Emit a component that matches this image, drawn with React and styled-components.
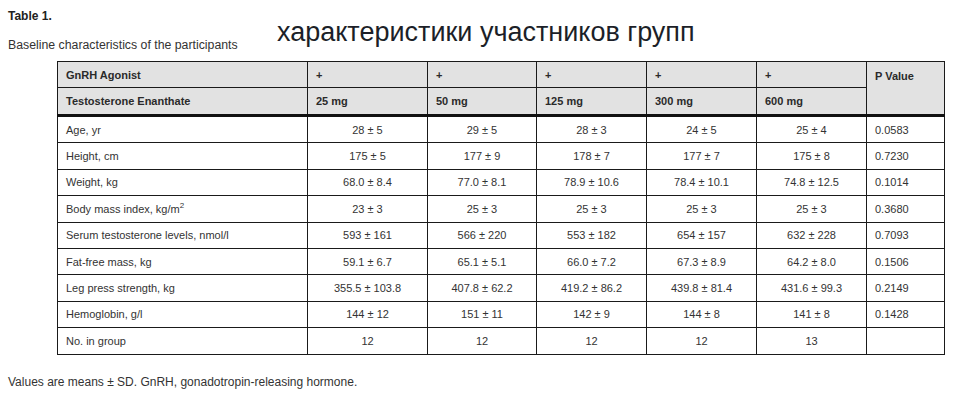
import styled, { createGlobalStyle } from 'styled-components';

const Global = createGlobalStyle`
  body {
    margin: 0;
    background: #fff;
    font-family: 'Liberation Sans', Arial, sans-serif;
    color: #333;
  }
`;

const Page = styled.div`
  width: 954px;
  height: 403px;
  padding: 9px 8px 0;
  box-sizing: border-box;
`;

const Label = styled.div`
  font-size: 12px;
  font-weight: bold;
  color: #222;
  line-height: 14px;
`;

const HeadRow = styled.div`
  display: flex;
  align-items: baseline;
  margin-top: -4px;
`;

const Caption = styled.div`
  font-size: 12.3px;
  color: #333;
  width: 269px;
  flex-shrink: 0;
  position: relative;
  top: 8px;
`;

const Title = styled.h1`
  margin: 0;
  font-size: 27px;
  font-weight: normal;
  color: #1c1f28;
  line-height: 26px;
`;

const Table = styled.table`
  margin: 16px 0 0 49px;
  border-collapse: collapse;
  width: 887px;
  table-layout: fixed;
  font-size: 11px;
  color: #333;
`;

const Th = styled.th`
  background: #e2e2e2;
  border: 1px solid #1a1a1a;
  border-bottom: ${p => (p.$thick ? '3px solid #111' : '1px solid #1a1a1a')};
  text-align: left;
  vertical-align: ${p => (p.$top ? 'top' : 'middle')};
  font-weight: bold;
  padding: ${p => (p.$top ? '8px 8px' : '0 8px')};
  height: ${p => p.$h || 25}px;
  color: #2a2a2a;
`;

const Td = styled.td`
  border: 1px solid #1a1a1a;
  padding: 0 8px;
  height: 25.4px;
  text-align: ${p => p.$align || 'center'};
  vertical-align: middle;
`;

const Note = styled.p`
  margin: 20px 0 0;
  font-size: 12px;
  color: #333;
`;

const cols = [250, 120, 109, 110, 110, 110, 78];
const doses = ['25 mg', '50 mg', '125 mg', '300 mg', '600 mg'];

const rows = [
  ['Age, yr', ['28 ± 5', '29 ± 5', '28 ± 3', '24 ± 5', '25 ± 4'], '0.0583'],
  ['Height, cm', ['175 ± 5', '177 ± 9', '178 ± 7', '177 ± 7', '175 ± 8'], '0.7230'],
  ['Weight, kg', ['68.0 ± 8.4', '77.0 ± 8.1', '78.9 ± 10.6', '78.4 ± 10.1', '74.8 ± 12.5'], '0.1014'],
  [<>Body mass index, kg/m<sup style={{ fontSize: 8, lineHeight: 0 }}>2</sup></>, ['23 ± 3', '25 ± 3', '25 ± 3', '25 ± 3', '25 ± 3'], '0.3680'],
  ['Serum testosterone levels, nmol/l', ['593 ± 161', '566 ± 220', '553 ± 182', '654 ± 157', '632 ± 228'], '0.7093'],
  ['Fat-free mass, kg', ['59.1 ± 6.7', '65.1 ± 5.1', '66.0 ± 7.2', '67.3 ± 8.9', '64.2 ± 8.0'], '0.1506'],
  ['Leg press strength, kg', ['355.5 ± 103.8', '407.8 ± 62.2', '419.2 ± 86.2', '439.8 ± 81.4', '431.6 ± 99.3'], '0.2149'],
  ['Hemoglobin, g/l', ['144 ± 12', '151 ± 11', '142 ± 9', '144 ± 8', '141 ± 8'], '0.1428'],
  ['No. in group', ['12', '12', '12', '12', '13'], ''],
];

export default function App() {
  return (
    <Page>
      <Global />
      <Label>Table 1.</Label>
      <HeadRow>
        <Caption>Baseline characteristics of the participants</Caption>
        <Title>характеристики участников групп</Title>
      </HeadRow>
      <Table>
        <colgroup>
          {cols.map((w, i) => (
            <col key={i} style={{ width: w }} />
          ))}
        </colgroup>
        <thead>
          <tr>
            <Th>GnRH Agonist</Th>
            {doses.map(d => (
              <Th key={d}>+</Th>
            ))}
            <Th rowSpan={2} $top $thick>
              P Value
            </Th>
          </tr>
          <tr>
            <Th $thick $h={26}>Testosterone Enanthate</Th>
            {doses.map(d => (
              <Th key={d} $thick $h={26}>
                {d}
              </Th>
            ))}
          </tr>
        </thead>
        <tbody>
          {rows.map(([name, vals, p], i) => (
            <tr key={i}>
              <Td $align="left">{name}</Td>
              {vals.map((v, j) => (
                <Td key={j}>{v}</Td>
              ))}
              <Td $align="left">{p}</Td>
            </tr>
          ))}
        </tbody>
      </Table>
      <Note>Values are means ± SD. GnRH, gonadotropin-releasing hormone.</Note>
    </Page>
  );
}
